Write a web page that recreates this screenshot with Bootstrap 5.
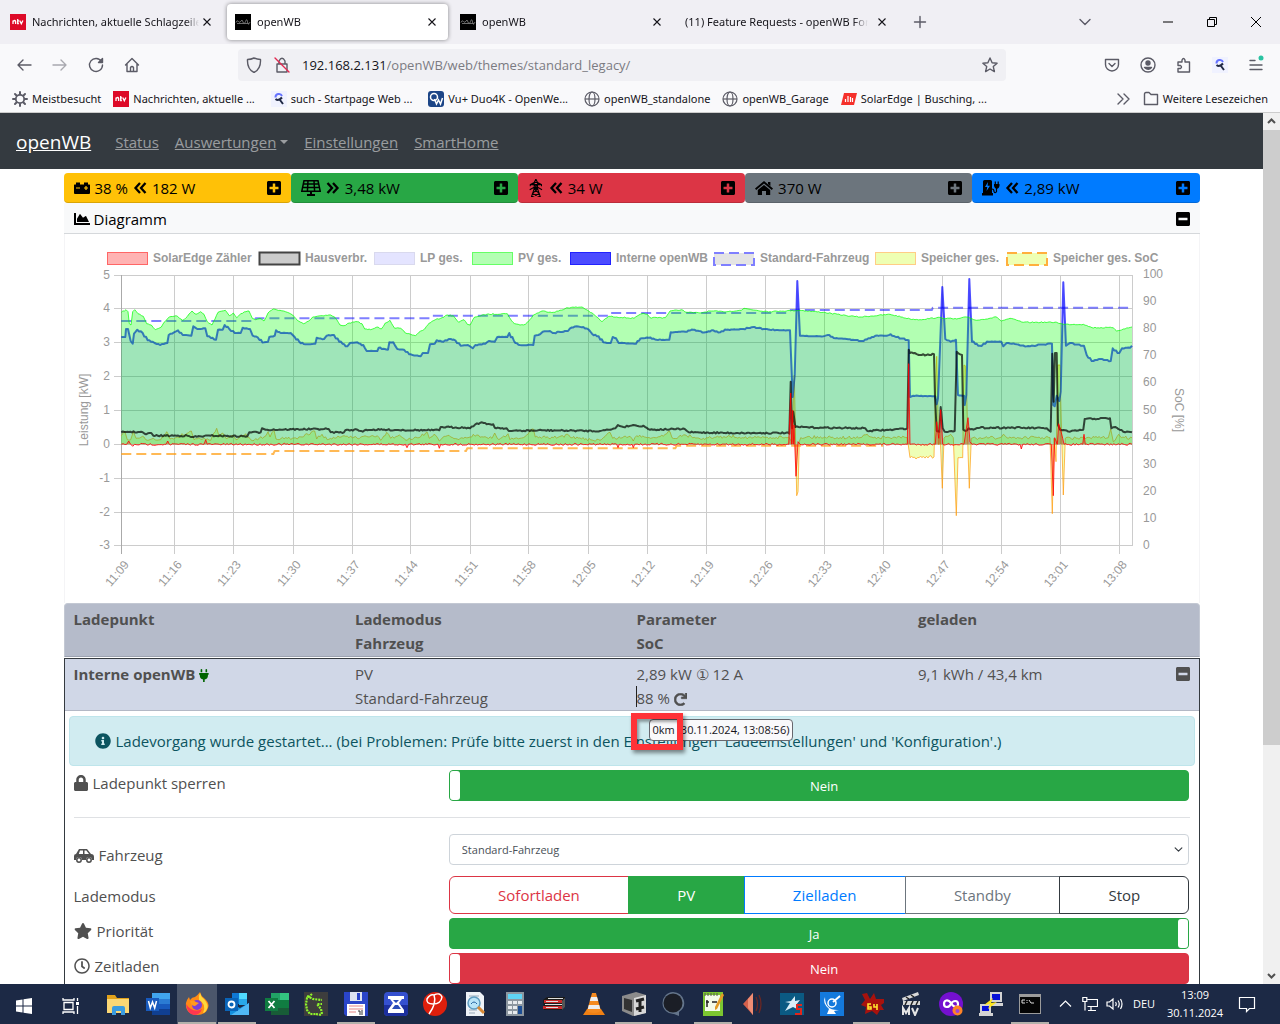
<!DOCTYPE html>
<html lang="de">
<head>
<meta charset="utf-8">
<meta name="viewport" content="width=device-width, initial-scale=1">
<title>openWB</title>
<link href="https://cdn.jsdelivr.net/npm/bootstrap@5.3.0/dist/css/bootstrap.min.css" rel="stylesheet">
<style>
:root{--ok:#28a745;--bad:#dc3545;--ink:#505050;}
body{font-family:"Open Sans","Noto Sans",sans-serif;font-size:15px;line-height:24px;color:#000;height:100vh;overflow:hidden;}
button{font-family:inherit;}
.ico{height:16px;width:auto;fill:currentColor;flex:none;}
.ico-s{height:13px;}
.ico-l{height:18px;}
.ico-plugged{color:#006400;}
.line-ico{width:16px;height:16px;flex:none;fill:none;stroke:#5b5b66;stroke-width:1.4;stroke-linecap:round;stroke-linejoin:round;}
/* browser frame */
.tabstrip{background:#f0eff4;height:44px;font-family:"Noto Sans","Open Sans",sans-serif;font-size:11px;line-height:16px;color:#15141a;}
.plain{background:none;border:0;padding:0;color:inherit;}
.tab-item{height:36px;padding:0 8px;border-radius:4px;gap:6px;width:221px;flex:none;margin-right:4px;}
.tab-on{background:#fff;box-shadow:0 0 4px rgba(0,0,0,.45);}
.tab-item a{color:inherit;text-decoration:none;overflow:hidden;white-space:nowrap;flex:1 1 0;min-width:0;-webkit-mask-image:linear-gradient(90deg,#000 92%,transparent);}
.tab-first{width:215px;padding:0 0 0 10px;margin-right:12px;}
.tab-first a{margin-right:-6px;}
.newtab{margin-left:10px;}
.alltabs{margin-right:67px;}
.toolbar{background:#f9f9fb;height:42px;}
.navbtns{width:222px;gap:20px;}
.toolbtns{gap:20px;}
.urlbar{background:#f0f0f4;border-radius:4px;height:32px;width:768px;font-size:13px;padding:0 8px;gap:12px;color:#15141a;}
.urlbar input{border:0;background:none;padding:0;color:#7b7b82;outline:0;flex:1 1 0;min-width:0;}
.bookmarks{background:#f9f9fb;height:27px;padding:0 12px;font-family:"Noto Sans","Open Sans",sans-serif;font-size:11px;line-height:16px;border-bottom:1px solid #ccc;}
.bookmarks a{color:#15141a;text-decoration:none;white-space:nowrap;}
.bookmarks a svg{margin-right:4px;}
/* page */
.viewport-area{min-height:0;overflow:hidden;}
.page-col{min-width:0;overflow:hidden;}
.scroller{width:17px;background:#f0f0f0;flex:none;}
.scroller .thumb{background:#cdcdcd;flex:0 0 615px;}
.topnav{background:#343a40;height:56px;padding:2px 16px 0;}
.topnav .navbar-brand{color:#fff;font-size:19px;text-decoration:underline;margin-right:24px;padding:0;}
.topnav a.nav-item-link{color:rgba(255,255,255,.5);}
.wrap{max-width:1140px;padding:4px 2px 0 2px;}
.tile{height:30px;flex:1 1 0;border-radius:4px;padding:0 10px;border-bottom:1px solid rgba(0,0,0,.15);gap:5px;}
.t-bat{background:#ffc107}.t-pv{background:var(--ok)}.t-grid{background:var(--bad)}.t-home{background:#6c757d}.t-lp{background:#007bff}
.dia-head{background:#f8f9fa;height:31px;padding:1px 10px 0;border-bottom:1px solid #d5d8db;}
.dia-body{border:1px solid #f4f4f6;border-top:0;border-bottom:0;}
.dia-body svg{display:block;width:100%;height:auto;}
.dia-body text{font-family:"Liberation Sans",Arial,sans-serif;font-size:12px;fill:#999;}
.dia-body .lg text{font-weight:bold;}
.g10{--bs-gutter-x:10px;margin:0;}
.lp-head{background:#b5bbca;border:1px solid #c3c8d3;border-bottom-color:#9ca2b0;border-radius:4px 4px 0 0;padding:3px 4px 1px;font-weight:bold;color:var(--ink);margin-bottom:1px;}
.lp-box{border:1px solid #343a40;color:var(--ink);}
.lp-row{background:#d0d7e7;border-bottom:1px solid #b3b8c5;padding:3px 4px 0;}
.lp-box .alert{background:#d1ecf1;border:1px solid #bee5eb;color:#0c5460;margin:5px 4px 4px;padding:12px 25px;border-radius:4px;gap:5px;}
.lp-form{padding:0 4px;}
.switch-btn{display:flex;width:100%;height:31px;padding:0;border-radius:4px;font-size:13px;color:#fff;border:1px solid var(--ok);background:var(--ok);margin-bottom:4px;}
.switch-btn .cap{flex:1 1 0;text-align:center;align-self:center;}
.switch-btn .knob{width:10px;align-self:stretch;background:#fff;border-radius:3px;}
.switch-btn.no{background:var(--bad);border-color:var(--bad);}
.rule{margin:16px 5px;border-top:1px solid #dfe1e4;}
.car-select{height:31px;font-size:11px;line-height:16px;padding:4px 12px;color:#495057;border:1px solid #ced4da;border-radius:4px;background-position:right 5px center;background-size:9px 9px;margin-bottom:11px;}
.modes{width:100%;margin-bottom:4px;}
.modes .btn{font-size:15px;height:38px;padding:6px 12px;line-height:24px;--bs-btn-bg:#fff;}
.m-r{color:var(--bad);border-color:var(--bad)}.m-g,.m-g:hover{background:var(--ok);color:#fff;border-color:var(--ok)}.m-b{color:#007bff;border-color:#007bff}.m-s{color:#6c757d;border-color:#6c757d}.m-d{color:#343a40;border-color:#343a40}
.lbl{display:flex;align-items:center;gap:5px;padding-top:1px;}
.caret-line{width:1px;height:21px;background:#222;left:4px;top:24px;}
.tip{left:17px;top:57px;background:#f9f9fb;border:1px solid #67676e;border-radius:4px;font-size:11px;line-height:20px;padding:0 3px;color:#15141a;white-space:nowrap;z-index:3;}
.redbox{left:-1px;top:51px;width:52px;height:37px;border:6px solid #ff3237;box-shadow:2px 3px 4px rgba(0,0,0,.45),inset 2px 3px 3px rgba(0,0,0,.35);z-index:4;}
/* taskbar */
.taskbar{background:#1c2945;height:40px;color:#fff;}
.start-btn{width:48px;}
.view-btn{width:50px;padding-right:4px;}
.taskbar .app{flex:1 1 0;height:40px;position:relative;}
.taskbar .app svg{width:24px;height:24px;display:block;margin:0 auto;}
.app.cur{background:#4b566b;}
.app.run::after{content:"";position:absolute;left:1px;right:1px;bottom:0;height:2px;background:#b3b1ab;}
.tray{width:230px;flex:none;font-size:11px;line-height:18px;gap:8px;padding:0 24px 0 8px;}
.tray svg{fill:none;stroke:#fff;stroke-width:1.2;flex:none;}
.tray .lang{width:26px;}
.tray .clock{width:60px;}
</style>
<script src="https://cdn.jsdelivr.net/npm/bootstrap@5.3.0/dist/js/bootstrap.bundle.min.js"></script>
</head>
<body class="d-flex flex-column">
<svg width="0" height="0" class="position-absolute" aria-hidden="true">
<symbol id="plus" viewBox="0 0 448 512"><path d="M400 32H48C21.500 32 0 53.500 0 80v352c0 26.500 21.500 48 48 48h352c26.500 0 48-21.500 48-48V80c0-26.500-21.500-48-48-48zm-32 252c0 6.600-5.400 12-12 12h-92v92c0 6.600-5.400 12-12 12h-56c-6.600 0-12-5.400-12-12v-92H92c-6.600 0-12-5.400-12-12v-56c0-6.600 5.400-12 12-12h92v-92c0-6.600 5.400-12 12-12h56c6.600 0 12 5.400 12 12v92h92c6.600 0 12 5.400 12 12v56z"/></symbol>
<symbol id="minus" viewBox="0 0 448 512"><path d="M400 32H48C21.500 32 0 53.500 0 80v352c0 26.500 21.500 48 48 48h352c26.500 0 48-21.500 48-48V80c0-26.500-21.500-48-48-48zM92 296c-6.600 0-12-5.400-12-12v-56c0-6.600 5.400-12 12-12h264c6.600 0 12 5.400 12 12v56c0 6.600-5.400 12-12 12H92z"/></symbol>
<symbol id="dl" viewBox="0 0 14 16"><path d="M7 3L2.500 8 7 13M12.500 3L8 8l4.500 5" fill="none" stroke="currentColor" stroke-width="2.300"/></symbol>
<symbol id="dr" viewBox="0 0 14 16"><path d="M1.500 3L6 8l-4.500 5M7 3l4.500 5L7 13" fill="none" stroke="currentColor" stroke-width="2.300"/></symbol>
<symbol id="x" viewBox="0 0 16 16"><path d="M4.500 4.500l7 7m0-7l-7 7" fill="none" stroke="#15141a" stroke-width="1.100"/></symbol>
<symbol id="ntv" viewBox="0 0 16 16"><path d="M0 0h16v16H0z" fill="#dd0a28"/><path d="M3 10V6.500M3 7.500q2-2 2.600 0V10M7.700 5v4.500h1.200M7 6.800h2M9.700 6.500l1.600 3.300 1.600-3.300" fill="none" stroke="#fff" stroke-width="1.300"/></symbol>
<symbol id="wb" viewBox="0 0 16 16"><path d="M0 0h16v16H0z"/><path d="M1 8.500q1-3 2.500-1t2.500-.5 2 1 2.500-.5 2 .5 2.500 0M2 9.500h12" fill="none" stroke="#777" stroke-width=".9"/></symbol>
<symbol id="q" viewBox="0 0 16 16"><path d="M0 0h16v16H0z" fill="#f0f2ff"/><path d="M4.500 6.500a3.400 3.400 0 016.500-1.500" fill="none" stroke="#6573ff" stroke-width="2"/><path d="M4.500 8q3 2.500 6.500-1.500M9 9l3 4" fill="none" stroke="#202945" stroke-width="2"/></symbol>
<symbol id="globe" viewBox="0 0 16 16"><g fill="none" stroke="#5b5b66" stroke-width="1.200"><circle cx="8" cy="8" r="7"/><ellipse cx="8" cy="8" rx="3" ry="7"/><path d="M1 8h14"/></g></symbol>
</svg>

<header>
<div class="tabstrip d-flex align-items-center">
  <div class="tab-item tab-first d-flex align-items-center"><svg width="16" height="16"><use href="#ntv"/></svg><a href="#">Nachrichten, aktuelle Schlagzeilen</a><button class="plain d-flex" aria-label="Tab schließen"><svg width="16" height="16"><use href="#x"/></svg></button></div>
  <div class="tab-item tab-on d-flex align-items-center"><svg width="16" height="16"><use href="#wb"/></svg><a href="#">openWB</a><button class="plain d-flex" aria-label="Tab schließen"><svg width="16" height="16"><use href="#x"/></svg></button></div>
  <div class="tab-item d-flex align-items-center"><svg width="16" height="16"><use href="#wb"/></svg><a href="#">openWB</a><button class="plain d-flex" aria-label="Tab schließen"><svg width="16" height="16"><use href="#x"/></svg></button></div>
  <div class="tab-item d-flex align-items-center"><a href="#">(11) Feature Requests - openWB Forum</a><button class="plain d-flex" aria-label="Tab schließen"><svg width="16" height="16"><use href="#x"/></svg></button></div>
  <button class="plain d-flex newtab" aria-label="Neuer Tab"><svg class="line-ico" viewBox="0 0 16 16"><path d="M8 2.500v11M2.500 8h11"/></svg></button>
  <div class="d-flex align-items-center ms-auto pe-3">
    <button class="plain d-flex alltabs" aria-label="Alle Tabs"><svg class="line-ico" viewBox="0 0 16 16"><path d="M3 5.500l5 5 5-5"/></svg></button>
    <button class="plain d-flex me-4" aria-label="Minimieren"><svg width="16" height="16"><path d="M3 8h10" stroke="#000"/></svg></button>
    <button class="plain d-flex mx-1" aria-label="Wiederherstellen"><svg width="16" height="16" fill="none" stroke="#000"><path d="M3.500 5.500h7v7h-7zM5.500 5.500v-2h7v7h-2"/></svg></button>
    <button class="plain d-flex ms-4" aria-label="Schließen"><svg width="16" height="16"><path d="M3 3l10 10M13 3L3 13" stroke="#000"/></svg></button>
  </div>
</div>
<div class="toolbar d-flex align-items-center px-3">
  <div class="d-flex navbtns">
    <button class="plain d-flex" aria-label="Zurück"><svg class="line-ico" viewBox="0 0 16 16"><path d="M15 8H2M7 3L2 8l5 5"/></svg></button>
    <button class="plain d-flex" aria-label="Vor"><svg class="line-ico opacity-50" viewBox="0 0 16 16"><path d="M1 8h13M9 3l5 5-5 5"/></svg></button>
    <button class="plain d-flex" aria-label="Neu laden"><svg class="line-ico" viewBox="0 0 16 16"><path d="M13.500 4.500A6.500 6.500 0 1014.500 8M14.500 1.500v4h-4z"/></svg></button>
    <button class="plain d-flex" aria-label="Startseite"><svg class="line-ico" viewBox="0 0 16 16"><path d="M1.500 8L8 1.500 14.500 8M3 7v7.500h10V7M6.500 14v-3.500q1.500-2 3 0V14"/></svg></button>
  </div>
  <div class="urlbar d-flex align-items-center">
    <svg class="line-ico" viewBox="0 0 16 16"><path d="M8 1q3 1.500 6.500 1.500Q15 12 8 15.500 1 12 1.500 2.500 5 2.500 8 1z"/></svg>
    <svg class="line-ico" viewBox="0 0 16 16"><path d="M3 7h10v8H3zM5 7V4q3-5.500 6 0v3"/><path d="M1 1l14 14" stroke="#e22850"/></svg>
    <div class="d-flex flex-grow-1"><label for="url">192.168.2.131</label><input id="url" type="text" value="/openWB/web/themes/standard_legacy/"></div>
    <svg class="line-ico" viewBox="0 0 16 16"><path d="M8 1l2.100 4.700 5 .5-3.800 3.400 1.100 5L8 12l-4.400 2.600 1.100-5L.9 6.200l5-.5z"/></svg>
  </div>
  <div class="d-flex ms-auto toolbtns">
    <button class="plain d-flex" aria-label="Pocket"><svg class="line-ico" viewBox="0 0 16 16"><path d="M1.500 2.500h13v5a6.500 6.500 0 01-13 0zM5 6.500l3 3 3-3"/></svg></button>
    <button class="plain d-flex" aria-label="Konto"><svg class="line-ico" viewBox="0 0 16 16"><circle cx="8" cy="8" r="7"/><circle cx="8" cy="6" r="2" fill="#5b5b66"/><path d="M4.500 10.500h7q-3 3.500-7 0z" fill="#5b5b66"/></svg></button>
    <button class="plain d-flex" aria-label="Erweiterungen"><svg class="line-ico" viewBox="0 0 16 16"><path d="M2 5h4V3q1.500-3 3 0v2h4.500v10H2v-3.500h2.500q2-1.500 0-3H2z"/></svg></button>
    <button class="plain d-flex" aria-label="Startpage"><svg width="16" height="16"><use href="#q"/></svg></button>
    <button class="plain d-flex" aria-label="Menü"><svg class="line-ico overflow-visible" viewBox="0 0 16 16"><path d="M2 3.500h5M2 8h12M2 12.500h12"/><circle cx="13" cy="1" r="2.500" fill="#2ac3a2" stroke="none"/></svg></button>
  </div>
</div>
<nav class="bookmarks d-flex align-items-center" aria-label="Lesezeichen">
  <a href="#" class="d-flex me-2 pe-1"><svg class="line-ico" viewBox="0 0 16 16"><circle cx="8" cy="8" r="4.200" stroke-width="1.800"/><path d="M8 1v2M8 13v2M1 8h2M13 8h2M3 3l1.500 1.500M11.500 11.500L13 13M3 13l1.500-1.500M11.500 4.500L13 3" stroke-width="2"/></svg>Meistbesucht</a>
  <a href="#" class="d-flex me-3"><svg width="16" height="16"><use href="#ntv"/></svg>Nachrichten, aktuelle ...</a>
  <a href="#" class="d-flex me-3"><svg width="16" height="16"><use href="#q"/></svg>such - Startpage Web ...</a>
  <a href="#" class="d-flex me-3"><svg width="16" height="16"><rect width="16" height="16" rx="3" fill="#1c4587"/><circle cx="6" cy="6" r="3.500" fill="none" stroke="#fff" stroke-width="1.500"/><path d="M6.500 8l2 5 2-4 2 4 2-6" fill="none" stroke="#fff" stroke-width="1.500"/></svg>Vu+ Duo4K - OpenWe...</a>
  <a href="#" class="d-flex me-2 pe-1"><svg width="16" height="16"><use href="#globe"/></svg>openWB_standalone</a>
  <a href="#" class="d-flex me-2 pe-1"><svg width="16" height="16"><use href="#globe"/></svg>openWB_Garage</a>
  <a href="#" class="d-flex"><svg width="16" height="16"><path d="M3 2h13l-3 12H0z" fill="#f5302b"/><path d="M4.500 11V8M7 11V5M9.500 11V6M11.500 11V7" stroke="#fff" stroke-width="1.200"/></svg>SolarEdge | Busching, ...</a>
  <button class="plain d-flex ms-auto me-2 pe-1" aria-label="Mehr"><svg class="line-ico" viewBox="0 0 16 16"><path d="M3 3l5 5-5 5M9 3l5 5-5 5"/></svg></button>
  <a href="#" class="d-flex"><svg class="line-ico" viewBox="0 0 16 16"><path d="M1.500 3q0-1.500 1.500-1.500h3L8 3.500h6.500v10h-13z"/></svg>Weitere Lesezeichen</a>
</nav>
</header>

<div class="viewport-area d-flex flex-grow-1">
<main class="page-col flex-grow-1">
  <nav class="topnav navbar flex-nowrap justify-content-start" aria-label="openWB">
    <a class="navbar-brand" href="#">openWB</a>
    <a class="nav-item-link me-3" href="#">Status</a>
    <a class="nav-item-link dropdown-toggle me-3" href="#">Auswertungen</a>
    <a class="nav-item-link me-3" href="#">Einstellungen</a>
    <a class="nav-item-link" href="#">SmartHome</a>
  </nav>
  <div class="container wrap">
    <div class="d-flex">
      <div class="tile t-bat d-flex align-items-center"><svg class="ico" viewBox="0 0 16 16"><path d="M2 2.500h4v2h4v-2h4v2h1.500q.5 0 .5.500v8q0 1-1 1H1q-1 0-1-1V5q0-.5.500-.5H2z"/><path d="M2 8h4M10 8h4M12 6v4" stroke="#ffc107" stroke-width="1.200"/></svg>38 % <svg class="ico" viewBox="0 0 14 16"><use href="#dl"/></svg>182 W<button class="plain d-flex ms-auto" aria-label="Speicher Details"><svg class="ico" viewBox="0 0 448 512"><use href="#plus"/></svg></button></div>
      <div class="tile t-pv d-flex align-items-center"><svg class="ico" viewBox="0 0 20 16"><path d="M3 .8h14l2.200 10.400H.8zM2.500 4h15M1.700 7.500h16.600M7 .8l-.6 10.400M13 .8l.6 10.400" fill="none" stroke="currentColor" stroke-width="1.500"/><path d="M9 11h2v3h3v2H6v-2h3z"/></svg><svg class="ico" viewBox="0 0 14 16"><use href="#dr"/></svg>3,48 kW<button class="plain d-flex ms-auto" aria-label="PV Details"><svg class="ico" viewBox="0 0 448 512"><use href="#plus"/></svg></button></div>
      <div class="tile t-grid d-flex align-items-center"><svg class="ico ico-l" viewBox="0 0 14 16"><path d="M7 0L5.500 3 2 5v1.500M7 0l1.500 3L12 5v1.500M5.500 3h3M2 5h10M5.500 3v5.500L3 16M8.500 3v5.500L11 16M5.500 5l3 3.500M8.500 5l-3 3.500h3M1.500 9.500L5 7.500h4l3.500 2M5.500 8.500L10 13 3 16M8.500 8.500L4 13l7 3" fill="none" stroke="currentColor" stroke-width=".9"/></svg><svg class="ico" viewBox="0 0 14 16"><use href="#dl"/></svg>34 W<button class="plain d-flex ms-auto" aria-label="Netz Details"><svg class="ico" viewBox="0 0 448 512"><use href="#plus"/></svg></button></div>
      <div class="tile t-home d-flex align-items-center"><svg class="ico" viewBox="0 0 18 16"><path d="M9 1l9 7.500-1.200 1.400L9 3.500 1.200 9.900 0 8.500zM13 2h2.400v4L13 4zM9 5l6.200 5v5H11v-4H7v4H2.800v-5z"/></svg>370 W<button class="plain d-flex ms-auto" aria-label="Haus Details"><svg class="ico" viewBox="0 0 448 512"><use href="#plus"/></svg></button></div>
      <div class="tile t-lp d-flex align-items-center"><svg class="ico" viewBox="0 0 18 16"><path d="M1 1.500Q1 0 2.500 0h6Q10 0 10 1.500V13h1v2.500H0V13h1z"/><path d="M6 2L3 7h2.300L4.500 11 8 5.700H5.600z" fill="#007bff"/><path d="M10 9q2 0 2 2.500 1 2.500 2.500 0V7" fill="none" stroke="currentColor" stroke-width="1.200"/><path d="M12 4h5.500v2q-.7 3-2.700 3T12 6zM12.700 1.500h1.200V4h-1.200zM15.600 1.500h1.200V4h-1.200z"/></svg><svg class="ico" viewBox="0 0 14 16"><use href="#dl"/></svg>2,89 kW<button class="plain d-flex ms-auto" aria-label="Ladepunkt Details"><svg class="ico" viewBox="0 0 448 512"><use href="#plus"/></svg></button></div>
    </div>
    <div class="dia-head d-flex align-items-center"><svg class="ico me-1" viewBox="0 0 512 512"><path d="M500 384c6.600 0 12 5.400 12 12v40c0 6.600-5.400 12-12 12H12c-6.600 0-12-5.400-12-12V76c0-6.600 5.400-12 12-12h40c6.600 0 12 5.400 12 12v308h436zM372.700 159.500L288 216l-85.300-113.700c-5.100-6.800-15.500-6.300-19.900 1L96 248v104h384l-89.900-187.800c-3.200-6.500-11.400-8.700-17.400-4.700z"/></svg>Diagramm<button class="plain d-flex ms-auto" aria-label="Diagramm einklappen"><svg class="ico" viewBox="0 0 448 512"><use href="#minus"/></svg></button></div>
    <div class="dia-body"><svg id="chart" viewBox="65 234 1134 369" role="img" aria-label="Leistungsdiagramm"></svg></div>

    <div class="lp-head"><div class="row g10">
      <div class="col-3">Ladepunkt</div><div class="col-3">Lademodus<br>Fahrzeug</div><div class="col-3">Parameter<br>SoC</div><div class="col-3">geladen</div>
    </div></div>
    <div class="lp-box">
      <div class="lp-row"><div class="row g10">
        <div class="col-3 fw-bold">Interne openWB <svg class="ico ico-s ico-plugged" viewBox="0 0 384 512"><path d="M320 32a32 32 0 0 0-64 0v96h64Zm48 128H16A16 16 0 0 0 0 176v32a16 16 0 0 0 16 16H32v32A160 160 0 0 0 160 412.800V512h64V412.800A160 160 0 0 0 352 256V224h16a16 16 0 0 0 16-16V176A16 16 0 0 0 368 160ZM128 32a32 32 0 0 0-64 0v96h64Z"/></svg></div>
        <div class="col-3">PV<br>Standard-Fahrzeug</div>
        <div class="col-3 position-relative">2,89 kW ① 12 A<br>88 % <svg class="ico ico-s" viewBox="0 0 512 512"><path stroke="currentColor" stroke-width="24" d="M500.300 0h-47.400a12 12 0 0 0-12 12.600l4 82.700A247.400 247.400 0 0 0 256 8C119.300 8 7.900 119.500 8 256.200 8.100 393.100 119.100 504 256 504a247.100 247.100 0 0 0 166.200-63.900 12 12 0 0 0 .5-17.400l-34-34a12 12 0 0 0-16.400-.6A176 176 0 1 1 402.100 157.800l-101.500-4.900a12 12 0 0 0-12.600 12v47.400a12 12 0 0 0 12 12h200.300a12 12 0 0 0 12-12V12a12 12 0 0 0-12-12z"/></svg>
          <span class="caret-line position-absolute"></span>
          <div class="tip position-absolute" role="tooltip">0km (30.11.2024, 13:08:56)</div>
          <div class="redbox position-absolute"></div>
        </div>
        <div class="col-3 d-flex align-items-start justify-content-between"><span>9,1 kWh / 43,4 km</span><button class="plain d-flex mt-1" aria-label="Einklappen"><svg class="ico" viewBox="0 0 448 512"><use href="#minus"/></svg></button></div>
      </div></div>
      <div class="alert d-flex align-items-center" role="alert"><svg class="ico" viewBox="0 0 512 512"><path d="M256 8C119 8 8 119 8 256s111 248 248 248 248-111 248-248S393 8 256 8zm0 110c23.200 0 42 18.800 42 42s-18.800 42-42 42-42-18.800-42-42 18.800-42 42-42zm56 254c0 6.600-5.400 12-12 12h-88c-6.600 0-12-5.400-12-12v-24c0-6.600 5.400-12 12-12h12v-64h-12c-6.600 0-12-5.400-12-12v-24c0-6.600 5.400-12 12-12h64c6.600 0 12 5.400 12 12v100h12c6.600 0 12 5.400 12 12v24z"/></svg><span>Ladevorgang wurde gestartet... (bei Problemen: Prüfe bitte zuerst in den Einstellungen 'Ladeeinstellungen' und 'Konfiguration'.)</span></div>
      <div class="lp-form">
        <div class="row g10">
          <div class="col-4"><label class="lbl" for="sw1"><svg class="ico" viewBox="0 0 448 512"><path d="M400 224h-24v-72C376 68.200 307.800 0 224 0S72 68.200 72 152v72H48c-26.500 0-48 21.500-48 48v192c0 26.500 21.500 48 48 48h352c26.500 0 48-21.500 48-48V272c0-26.500-21.500-48-48-48zm-104 0H152v-72c0-39.700 32.300-72 72-72s72 32.300 72 72v72z"/></svg>Ladepunkt sperren</label></div>
          <div class="col-8"><button id="sw1" class="switch-btn mb-0" role="switch" aria-checked="false"><span class="knob"></span><span class="cap">Nein</span></button></div>
        </div>
        <div class="rule"></div>
        <div class="row g10">
          <div class="col-4 pt-2"><label class="lbl" for="car"><svg class="ico" viewBox="0 0 20 16"><path fill-rule="evenodd" d="M5 2h8l4 5q3 0 3 3v3h-2a3 3 0 00-6 0H8a3 3 0 00-6 0H0V9q0-2 2-2zM6 3.500L4.800 7H9V3.500zM10.500 3.500V7H15l-2.700-3.500z"/><circle cx="5" cy="13" r="2.200" fill="none" stroke="currentColor" stroke-width="1.500"/><circle cx="15" cy="13" r="2.200" fill="none" stroke="currentColor" stroke-width="1.500"/></svg>Fahrzeug</label></div>
          <div class="col-8"><select id="car" class="form-select car-select"><option>Standard-Fahrzeug</option></select></div>
        </div>
        <div class="row g10">
          <div class="col-4 pt-2"><span id="lm">Lademodus</span></div>
          <div class="col-8"><div class="btn-group modes" role="group" aria-labelledby="lm"><button class="btn m-r">Sofortladen</button><button class="btn m-g">PV</button><button class="btn m-b">Zielladen</button><button class="btn m-s">Standby</button><button class="btn m-d">Stop</button></div></div>
        </div>
        <div class="row g10">
          <div class="col-4"><label class="lbl" for="sw2"><svg class="ico" viewBox="0 0 576 512"><path d="M259.300 17.800L194 150.200 47.900 171.500c-26.200 3.800-36.700 36.100-17.700 54.600l105.700 103-25 145.500c-4.500 26.300 23.200 46 46.400 33.700L288 439.600l130.700 68.700c23.200 12.200 50.900-7.400 46.400-33.700l-25-145.500 105.700-103c19-18.500 8.500-50.800-17.700-54.600L382 150.200 316.700 17.800c-11.700-23.600-45.600-23.900-57.400 0z"/></svg>Priorität</label></div>
          <div class="col-8"><button id="sw2" class="switch-btn" role="switch" aria-checked="true"><span class="cap">Ja</span><span class="knob"></span></button></div>
        </div>
        <div class="row g10">
          <div class="col-4"><label class="lbl" for="sw3"><svg class="ico" viewBox="0 0 512 512"><path d="M256 8C119 8 8 119 8 256s111 248 248 248 248-111 248-248S393 8 256 8zm0 448c-110.500 0-200-89.500-200-200S145.500 56 256 56s200 89.500 200 200-89.500 200-200 200zm61.800-104.400l-84.900-61.700c-3.100-2.300-4.900-5.900-4.900-9.700V116c0-6.600 5.400-12 12-12h32c6.600 0 12 5.400 12 12v141.700l66.800 48.600c5.400 3.900 6.500 11.400 2.600 16.800L334.600 349c-3.900 5.300-11.400 6.500-16.800 2.600z"/></svg>Zeitladen</label></div>
          <div class="col-8"><button id="sw3" class="switch-btn no" role="switch" aria-checked="false"><span class="knob"></span><span class="cap">Nein</span></button></div>
        </div>
      </div>
    </div>
  </div>
</main>
<div class="scroller d-flex flex-column" aria-hidden="true"><svg width="17" height="17"><path d="M5 10l3.500-3.500L12 10" fill="none" stroke="#505050" stroke-width="2"/></svg><div class="thumb"></div><svg class="mt-auto" width="17" height="17"><path d="M5 7l3.500 3.500L12 7" fill="none" stroke="#505050" stroke-width="2"/></svg></div>
</div>

<footer class="taskbar d-flex align-items-center flex-shrink-0">
  <button class="plain start-btn" aria-label="Start"><svg width="16" height="16" fill="#fff"><path d="M0 2.500L6.500 1.500v6H0zM7.500 1.300L16 0v7.500H7.500zM0 8.500h6.500v6L0 13.500zM7.500 8.500H16V16l-8.500-1.300z"/></svg></button>
  <button class="plain view-btn" aria-label="Taskansicht"><svg width="18" height="18" fill="none" stroke="#fff" stroke-width="1.300"><path d="M2 5.500h9v7H2zM1 1v2h11V1M1 17v-2h11v2M15.500 1v3M15.500 9v8"/><path d="M14 5h3v3h-3z" fill="#fff" stroke="none"/></svg></button>
  <div class="d-flex flex-grow-1">
  <button class="plain app" aria-label="Explorer"><svg viewBox="0 0 24 24"><path d="M1 3h8l2 3h12v15H1z" fill="#e2a21b"/><path d="M1 7h22v14H1z" fill="#fbd775"/><path d="M6 23v-7q0-2 2-2h9q2 0 2 2v7h-4v-4h-5v4z" fill="#3a9be0"/></svg></button>
  <button class="plain app" aria-label="Word"><svg viewBox="0 0 24 24"><path d="M6 1h18v6H6z" fill="#41a5ee"/><path d="M6 7h18v6H6z" fill="#2b7cd3"/><path d="M6 12h18v5H6z" fill="#185abd"/><path d="M6 17h18v6H6z" fill="#103f91"/><path d="M0 6h13v13H0z" fill="#185abd"/><path d="M2.500 9l1.800 7L6.500 10l2.200 6 1.800-7" fill="none" stroke="#fff" stroke-width="1.500"/></svg></button>
  <button class="plain app cur run" aria-label="Firefox"><svg viewBox="0 0 24 24"><path d="M12 23C5 23 0 18 1 11q.5-3 3-6l1 3q2-3 5-3 2-1 5-5 1 4 4 6 6 5 4 10-2 7-11 7z" fill="#ff8a16"/><path d="M15 1q1 4 4 6 5 6 3 10-1 3-4 4Q22 12 14 8q-1-4 1-7z" fill="#ffd83b"/><path d="M1 12q2 3 5 5 5 3 11 0-2 6-8 6-7-1-8-11z" fill="#ff3750"/><circle cx="12" cy="13" r="5" fill="#7a3fd8"/><path d="M5 9q4-1 6 1l3 1-4 3q-4 0-5-5z" fill="#ff9a1c"/></svg></button>
  <button class="plain app run" aria-label="Outlook"><svg viewBox="0 0 24 24"><path d="M7 1h15v11H7z" fill="#0f78d4"/><path d="M14 1h8v6h-8z" fill="#50d9ff"/><path d="M14 7h8v6h-8z" fill="#28a8ea"/><path d="M5 11l10 5 9-5v12H5z" fill="#1490df"/><path d="M24 11v12H6z" fill="#50b8f5"/><path d="M0 6h13v13H0z" fill="#0a64b8"/><circle cx="6.500" cy="12.500" r="3" fill="none" stroke="#fff" stroke-width="1.800"/></svg></button>
  <button class="plain app" aria-label="Excel"><svg viewBox="0 0 24 24"><path d="M6 1h9v7H6z" fill="#21a366"/><path d="M15 1h9v7h-9z" fill="#33c481"/><path d="M6 8h18v8H6z" fill="#107c41"/><path d="M6 16h18v7H6z" fill="#185c37"/><path d="M0 6h13v13H0z" fill="#107c41"/><path d="M3.500 9l6 7m0-7l-6 7" stroke="#fff" stroke-width="1.800"/></svg></button>
  <button class="plain app" aria-label="Greenshot"><svg viewBox="0 0 24 24"><path d="M0 0h24v24H0z" fill="#3d3d3d"/><path d="M8 2L3 6l-1 6 1 6 3 4 6 0M3 4l6 3 9 1M18 22l-1-5-4-5h5M12 22l6 1" fill="none" stroke="#8df52b" stroke-width="2.200" stroke-dasharray="2 1"/></svg></button>
  <button class="plain app run" aria-label="Sicherung"><svg viewBox="0 0 24 24"><path d="M0 0h24v24H2l-2-2z" fill="#2a45c9"/><path d="M6 0h12v9H6z" fill="#dce3f1"/><path d="M13 1h3v7h-3z" fill="#2a45c9"/><path d="M3 12h18v12H3z" fill="#fff"/><path d="M5 14h14M5 17h14M5 20h7" stroke="#e58585"/><path d="M14 19h2v4M18 18v5" stroke="#333" fill="none"/></svg></button>
  <button class="plain app" aria-label="Scanner"><svg viewBox="0 0 24 24"><rect width="24" height="24" rx="4" fill="#3550cf"/><path d="M0 13h24v7q0 4-4 4H4q-4 0-4-4z" fill="#1c2f9e"/><path d="M4 4h16v3h-2l-3 4 5 7v3H4v-3l5-7-3-4H4z" fill="#fff"/><path d="M9 8h6l-3 3zM11 13h3l3 4H8z" fill="#2a4db8"/></svg></button>
  <button class="plain app" aria-label="PDF"><svg viewBox="0 0 24 24"><circle cx="12" cy="12" r="12" fill="#de1f0c"/><path d="M6 22Q14 11 11 3q6-3 8 2-1 7-9 7-7 0-6-5 3-5 7-4" fill="none" stroke="#fff" stroke-width="1.500"/></svg></button>
  <button class="plain app" aria-label="Suche"><svg viewBox="0 0 24 24"><path d="M3 0h14l4 4v20H3z" fill="#eef2f7"/><path d="M6 4h10M6 18h8M6 21h6" stroke="#9ab"/><circle cx="11" cy="11" r="6" fill="#b9e3f7" stroke="#5f9cc0" stroke-width="1.500"/><path d="M8 12q3-4 6 0" stroke="#2563a0" fill="none"/><path d="M15 15l6 6" stroke="#d98a36" stroke-width="3"/></svg></button>
  <button class="plain app" aria-label="Rechner"><svg viewBox="0 0 24 24"><path d="M3 0h18v24H3z" fill="#8c969f"/><path d="M5 2h14v5H5z" fill="#5fd4f4"/><path d="M5 9h4v3H5zm5 0h4v3h-4zm-5 5h4v3H5zm5 0h4v3h-4zm-5 5h4v3H5zm5 0h4v3h-4zM15 9h4v3h-4z" fill="#e7ebee"/><path d="M15 14h4v8h-4z" fill="#1d4e94"/></svg></button>
  <button class="plain app" aria-label="Bücher"><svg viewBox="0 0 24 24"><path d="M1 8l4-3h18v10l-3 3H2z" fill="#1a1a1a"/><path d="M2 8h18v3H2zM1 14h19v3H1z" fill="#c72a2a"/><path d="M3 12.500h17M6 6.500h15M4 9.500h12M4 15.500h12" stroke="#ddd"/><path d="M20 9l3-3v9l-3 3z" fill="#555"/></svg></button>
  <button class="plain app" aria-label="VLC"><svg viewBox="0 0 24 24"><path d="M5 17h14l4 6H1z" fill="#f08013"/><path d="M10 1h4l5 18q-7 4-14 0z" fill="#f58a1f"/><path d="M9 5h6l1.200 4H7.800zM6.800 13h10.400l1 4H5.800z" fill="#eee"/></svg></button>
  <button class="plain app run" aria-label="Würfel"><svg viewBox="0 0 24 24"><path d="M0 4l14-4 10 3v18l-13 3L0 19z" fill="#8b8b8b"/><path d="M12 6l12-3v18l-12 3z" fill="#d8d8d8"/><path d="M2 6l8 2v12l-8-3z" fill="#333"/><path d="M14 9l8-2M14 17l8-2M18 8v12" stroke="#222" stroke-width="3"/></svg></button>
  <button class="plain app" aria-label="Kreis"><svg viewBox="0 0 24 24"><path d="M12 0a12 11 0 016 20v4l-5-2A11 11 0 1112 0z" fill="#64758b"/><circle cx="12" cy="11" r="9.500" fill="#1b1e26"/></svg></button>
  <button class="plain app run" aria-label="Notizen"><svg viewBox="0 0 24 24"><path d="M2 0h20v24H2z" fill="#7cc630"/><path d="M4 3h15v16H4z" fill="#f4fbe9"/><path d="M4 1v3m3-3v3m3-3v3m3-3v3m3-3v3" stroke="#555"/><path d="M5 10h3m3 0h5M6 8v7" stroke="#222" stroke-width="1.500"/><path d="M21 1l2 2-7 14-2 1v-3z" fill="#e39b26"/></svg></button>
  <button class="plain app" aria-label="Lautsprecher"><svg viewBox="0 0 24 24"><path d="M2 12l10-11v22z" fill="#d4604b"/><path d="M12 1v22l-5-7V7z" fill="#ee8d74"/><path d="M15 5q3 7 0 14M18 3q4 9 0 18" fill="none" stroke="#6b2723" stroke-width="1.300"/></svg></button>
  <button class="plain app" aria-label="StarMoney"><svg viewBox="0 0 24 24"><path d="M0 1h24v22H0z" fill="#0b5a83"/><path d="M5 19l5-8-5-1 6-1 4-5v5l5-1-4 5 1 4-4-2z" fill="#dbeef7"/><path d="M22 13h-5v4h4v5h-6" fill="none" stroke="#e3261b" stroke-width="2"/></svg></button>
  <button class="plain app" aria-label="Satellit"><svg viewBox="0 0 24 24"><path d="M0 0h24v24H0z" fill="#1479dc"/><path d="M5 5q0 14 14 13l-5 1 2 3H7l2-5Q2 11 5 5z" fill="#fff"/><path d="M6 6l11 11" stroke="#1479dc"/><circle cx="12" cy="11" r="4" fill="none" stroke="#fff" stroke-width="1.500"/><path d="M13 10l7-6" stroke="#fff" stroke-width="2"/></svg></button>
  <button class="plain app run" aria-label="IrfanView"><svg viewBox="0 0 24 24"><path d="M2 2l5-1 3 6 4-6 2 6h8v4l-3 2 3 5h-4l-3 5-5-4-7 3 1-7-5-2 4-5z" fill="#a8120d"/><path d="M11 12H8v5h3v-2H8M14 12v3h3v-3 6" stroke="#ffe52e" fill="none" stroke-width="1.600"/></svg></button>
  <button class="plain app" aria-label="Media"><svg viewBox="0 0 24 24"><path d="M3 6L19 0l1 3L4 9zM4 9h17v4H4z" fill="#d9d9d9"/><path d="M7 5l3 2M12 3l3 2M8 9l-2 4M14 9l-2 4M19 9l-2 4" stroke="#222" stroke-width="1.500"/><path d="M4 23v-7l3 5 3-5v7M13 16l3 7 3-7" fill="none" stroke="#e4e4e4" stroke-width="2"/></svg></button>
  <button class="plain app" aria-label="Firefox privat"><svg viewBox="0 0 24 24"><circle cx="12" cy="12" r="12" fill="#7410d0"/><path d="M12 11c-3-4-7-3-7 1s5 4 7 0 7-4 7 0-4 4-7-1z" fill="none" stroke="#fff" stroke-width="2.200"/><circle cx="18.500" cy="18.500" r="5" fill="#ff8327"/><circle cx="18.500" cy="19" r="2" fill="#a045d8"/></svg></button>
  <button class="plain app" aria-label="PuTTY"><svg viewBox="0 0 24 24"><path d="M11 0h12v10H11zM1 12h11v9H1zM12 11h12v3H12zM0 21h14v3H0z" fill="#d3d3d3"/><path d="M13 2h8v6h-8zM3 14h7v5H3z" fill="#0710d8"/><path d="M14 6l-9 7 6-1-2 5 9-7-6 1z" fill="#ffe61d"/></svg></button>
  <button class="plain app run" aria-label="Eingabeaufforderung"><svg viewBox="0 0 24 24"><path d="M1 2h22v20H1z" fill="#9b9b9b"/><path d="M2 5h20v16H2z" fill="#050505"/><path d="M7 8H4v3h3M9 8v1M9 10v1M11 8l2 3h3" stroke="#ddd" fill="none"/></svg></button>
  </div>
  <div class="tray d-flex align-items-center">
    <svg width="16" height="16"><path d="M2 10.500l5.500-5.500 5.500 5.500"/></svg>
    <svg width="16" height="16"><path d="M5.500 3.500h10v7h-10M9 10.500V14M6 14.500h8M.8 1.500h4v4h-4zM3 6v8.500"/></svg>
    <svg width="17" height="16"><path d="M1 6h2.500L7 3v10L3.500 10H1zM9.500 6q1.500 2 0 4M12 4.500q2.500 3.500 0 7M14.500 3q3 5 0 10"/></svg>
    <span class="text-center lang">DEU</span>
    <div class="text-center clock">13:09<br>30.11.2024</div>
    <svg width="18" height="18" class="ms-auto"><path d="M1.500 2.500h15v11h-5l-3 3v-3h-7z"/></svg>
  </div>
</footer>

<script>
// Chart: traces are stored as x,y pairs in thirds of a unit, relative to a segment origin.
const out = [];
const seg = (ox, s) => s.trim().split(/\s+/).map(p => { const [a, b] = p.split(',').map(Number); return [ox + a / 3, 265 + b / 3]; });
let seed = 7;
const rnd = () => (seed = (seed * 16807) % 2147483647) / 2147483647 - .5;
// adds intermediate samples with a little jitter; steps between near values
function wobble(pts, amp, stepped) {
  const r = [pts[0]];
  for (let i = 1; i < pts.length; i++) {
    const [x0, y0] = pts[i - 1], [x1, y1] = pts[i], n = Math.floor((x1 - x0) / 1.5);
    for (let k = 1; k < n; k++) {
      const t = k / n, u = stepped && Math.abs(y1 - y0) < 12 ? Math.round(t * 2) / 2 : t;
      r.push([x0 + (x1 - x0) * t, y0 + (y1 - y0) * u + rnd() * amp]);
    }
    r.push([x1, y1]);
  }
  return r;
}
const str = p => p.map(a => a[0].toFixed(1) + ',' + a[1].toFixed(1)).join(' ');
const A = 64, B = 470, C = 780, Z = 444.3;
const pv = wobble([...seg(A, `172,142 186,134 192,140 196,176 201,180 206,140 212,134 222,146 238,154 248,176 262,180 274,194 292,186 300,172 316,156 336,152 356,166 366,158 384,138 396,148 410,140 420,148 430,170 444,180 462,142 484,136 496,152 508,144 518,158 530,146 546,140 555,138 565,160 575,164 588,160 600,168 612,144 628,132 648,136 670,142 686,150 700,166 718,176 734,168 746,156 770,152 800,150 814,158 828,180 840,182 856,174 880,170 894,176 902,192 920,194 942,186 952,192 964,174 978,166 992,190 1010,190 1024,204 1040,208 1054,212 1070,198 1082,192 1096,174 1114,164 1130,160 1150,150 1168,152 1184,172 1200,164 1210,178`),
 ...seg(B, `0,180 14,156 50,148 106,146 112,146 124,166 134,176 150,180 166,178 180,164 190,150 216,138 250,142 280,134 290,128 336,126 356,138 376,152 396,170 416,154 440,156 492,160 516,146 532,148 540,158 586,158 600,138 634,134 650,142 690,144 720,138 760,140 814,136 822,130 860,136 900,140`),
 ...seg(C, `0,138 60,136 130,142 200,152 240,156 330,148 390,162 420,164 470,158 530,162 560,156 590,166 650,156 664,168 690,160 730,172 830,172 850,178 910,178 936,188 1000,188 1010,198 1030,192 1056,186`)], 1);
const lp = wobble([...seg(A, `172,216 184,216 186,192 192,192 200,228 206,236 210,206 220,194 236,204 256,226 272,234 288,240 310,234 314,210 330,202 342,196 356,210 382,212 388,184 400,192 424,190 430,214 456,224 462,194 476,194 482,180 496,192 518,204 530,204 536,188 558,192 566,212 582,218 600,232 612,230 616,216 632,212 636,196 650,204 680,204 692,216 706,230 724,238 754,236 758,218 780,222 788,212 810,210 826,230 850,244 858,234 880,232 898,240 908,258 940,258 944,248 972,254 976,232 988,232 1000,252 1020,254 1036,268 1070,274 1076,264 1092,264 1098,238 1112,236 1118,226 1138,230 1160,222 1174,226 1190,242 1212,240`),
 ...seg(B, `0,244 8,250 16,240 46,236 56,228 74,230 82,216 112,216 118,204 132,228 150,240 190,240 194,212 210,208 218,200 240,198 248,204 294,198 300,190 320,184 340,186 356,194 366,206 386,214 400,232 422,234 428,216 438,220 446,234 498,236 516,220 536,218 560,224 598,224 602,202 646,200 670,194 706,202 730,196 750,202 770,194 820,192 850,186 886,192 900,194 956,196 960,196 968,396 974,330 982,48 990,212 1020,214`),
 ...seg(C, `130,214 148,210 166,220 200,222 246,228 270,220 286,212 320,212 332,208 350,216 386,226 390,396 400,392 466,394 470,418 474,400 487,66 496,222 512,230 528,224 534,390 552,392 554,420 559,390 568,42 576,230 600,242 626,230 664,230 670,244 680,234 710,238 740,244 760,242 816,236 820,420 824,424 830,392 838,408 842,380 850,52 858,242 870,234 912,242 920,270 940,288 962,282 992,288 998,250 1018,264 1026,250 1050,248 1056,242`)], .6, true);
const haus = wobble([...seg(A, `172,502 190,500 236,502 246,508 262,504 268,512 370,512 380,516 440,512 550,514 556,502 590,502 594,490 610,494 780,492 794,492 800,502 840,502 844,496 880,494 896,500 906,494 1126,496 1130,486 1212,488`),
 ...seg(B, `0,490 16,478 36,472 50,478 70,478 74,488 110,490 116,498 220,496 390,498 416,494 436,490 444,480 460,486 490,480 506,484 520,482 540,494 644,492 656,502 800,504 880,504 956,504 958,506 962,350 966,490 970,440 976,486 1056,488`),
 ...seg(C, `130,488 256,490 262,498 340,494 382,490 386,254 390,264 404,264 416,270 462,268 465,400 470,498 478,500 482,426 488,490 494,500 524,498 530,260 546,270 550,494 556,498 566,490 580,494 600,488 700,488 800,490 812,500 817,266 821,410 825,264 830,264 834,480 840,494 870,500 910,494 914,462 990,460 994,490 1006,486 1030,500 1056,502`)], 1.5);
const netz = wobble([...seg(A, `172,538 188,538 194,528 200,538 206,544 212,538 306,538 311,528 316,538 420,538 425,524 430,538 1024,538 1029,548 1034,538 1122,538 1126,550 1130,538`),
 ...seg(B, `0,538 440,538 444,548 448,538 486,538 490,548 494,538 956,538 962,384 965,538 968,436 970,538 972,480 978,634 984,530 990,538`),
 ...seg(C, `130,538 382,538 386,296 390,538 466,538 470,470 476,520 482,434 488,538 552,538 564,458 570,530 576,538 720,538 724,552 728,538 814,538 820,692 824,518 832,538 836,476 848,520 852,538 908,538 912,508 916,538 1056,538`)], 2);
const bat = wobble([...seg(A, `172,512 182,498 190,524 200,524 208,500 216,520 240,516 250,526 268,520 290,524 308,500 318,522 340,516 382,498 390,524 420,518 440,526 458,490 466,516 476,504 488,522 508,512 516,524 545,506 560,524 600,516 612,500 618,516 630,496 636,522 670,520 700,522 752,498 758,522 774,508 790,524 840,512 880,520 940,512 950,526 968,502 980,520 1006,510 1026,526 1060,518 1090,502 1096,520 1110,508 1126,528 1150,512 1180,522 1212,518`),
 ...seg(B, `0,516 10,508 40,516 66,520 74,504 82,520 106,516 114,506 120,524 160,518 190,492 196,516 250,518 296,510 302,518 390,526 420,502 428,520 480,514 490,528 500,512 560,518 600,500 606,518 650,512 700,520 780,514 850,518 956,516 966,530 973,330 980,692 984,680 988,530 992,518`),
 ...seg(C, `80,516 240,518 262,508 280,518 382,518 390,578 462,576 466,400 470,274 476,540 480,500 487,670 492,520 512,508 520,518 529,752 534,578 548,578 552,300 556,302 560,380 564,560 568,670 574,520 660,518 670,508 680,518 810,518 817,746 822,520 828,590 834,300 840,300 842,400 850,690 856,520 985,518 992,492 1000,530 1016,508 1024,518 1056,518`)], 3);
const socCar = [...seg(A, '172,168 572,168 575,160 1102,160 1106,152'), ...seg(B, '416,152 420,144 950,144 958,135'), ...seg(C, '456,135 458,128 1056,128')];
const socBat = [...seg(A, '172,567 628,567 632,558 1206,558 1210,550'), ...seg(B, '616,550 620,542 1240,542')];
const line = (x1, y1, x2, y2, c) => out.push(`<path d="M${x1} ${y1}L${x2} ${y2}" stroke="${c || '#ccc'}" fill="none"/>`);
const text = (x, y, t, a, rot) => out.push(`<text x="${x}" y="${y}" text-anchor="${a}"${rot ? ` transform="rotate(${rot} ${x} ${y})"` : ''}>${t}</text>`);
[275.5, 308.5, 342.5, 376.5, 410.5, 444.5, 478.5, 512.5, 545.5].forEach((y, i) => { line(114, y, 1133, y); text(110, y + 3, 5 - i, 'end'); });
[121.5, 174.5, 233.5, 293.5, 352.5, 410.5, 470.5, 528.5, 588.5, 647.5, 706.5, 765.5, 824.5, 883.5, 942.5, 1001.5, 1060.5, 1119.5].forEach((x, i) => {
  line(x, 275, x, 554);
  const m = 669 + i * 7;
  text(x + 8, 565, Math.floor(m / 60) + ':' + String(m % 60).padStart(2, '0'), 'end', -50);
});
line(1132.5, 275, 1132.5, 546);
line(121.5, 275, 121.5, 554, '#aaa');
for (let i = 0; i <= 10; i++) text(1143, Math.round(549 - i * 27.1), i * 10, 'start');
text(88, 410, 'Leistung [kW]', 'middle', -90);
text(1175, 410, 'SoC [%]', 'middle', 90);
const area = (p, f) => out.push(`<polygon points="${p[0][0]},${Z} ${str(p)} ${p[p.length - 1][0]},${Z}" fill="${f}"/>`);
const trace = (p, c, w, d) => out.push(`<polyline points="${str(p)}" fill="none" stroke="${c}" stroke-width="${w}" stroke-linejoin="round"${d ? ` stroke-dasharray="${d}"` : ''}/>`);
area(bat, 'rgba(200,255,13,.3)');
trace(socBat, 'rgba(255,155,13,.7)', 2, '10 5');
trace(bat, 'rgba(255,155,13,.7)', 1);
trace(socCar, 'rgba(0,0,255,.5)', 2, '10 5');
trace(lp, 'rgba(0,0,255,.7)', 2);
area(pv, 'rgba(0,255,0,.3)');
area(lp, 'rgba(0,0,255,.1)');
trace(pv, 'rgba(0,255,0,.7)', 1);
trace(haus, 'rgba(0,0,0,.7)', 2);
area(netz, 'rgba(255,0,0,.3)');
trace(netz, 'rgba(255,0,0,.8)', 1);
out.push('<g class="lg">');
[[107, 'SolarEdge Zähler', '#ffb3b3', '#ff6666'], [259, 'Hausverbr.', '#ccc', '#444'], [374, 'LP ges.', '#e4e4ff', '#d9d9ee'], [472, 'PV ges.', '#b3ffb3', '#66ff66'], [570, 'Interne openWB', '#4c4cff', '#2222ff'], [714, 'Standard-Fahrzeug', '#e4e4e4', '#7f7fff', 1], [875, 'Speicher ges.', '#eeffb3', '#ffcd86'], [1007, 'Speicher ges. SoC', '#eeffb3', '#ffaf3d', 1]].forEach(([x, t, f, s, d]) => {
  out.push(`<rect x="${x + (d ? 0 : .5)}" y="${d ? 253 : 252.5}" width="40" height="12" fill="${f}" stroke="${s}" stroke-width="${d || x === 259 ? 2 : 1}"${d ? ' stroke-dasharray="10 5"' : ''}/>`);
  text(x + 46, 262, t, 'start');
});
out.push('</g>');
document.getElementById('chart').innerHTML = out.join('');
</script>
</body>
</html>
